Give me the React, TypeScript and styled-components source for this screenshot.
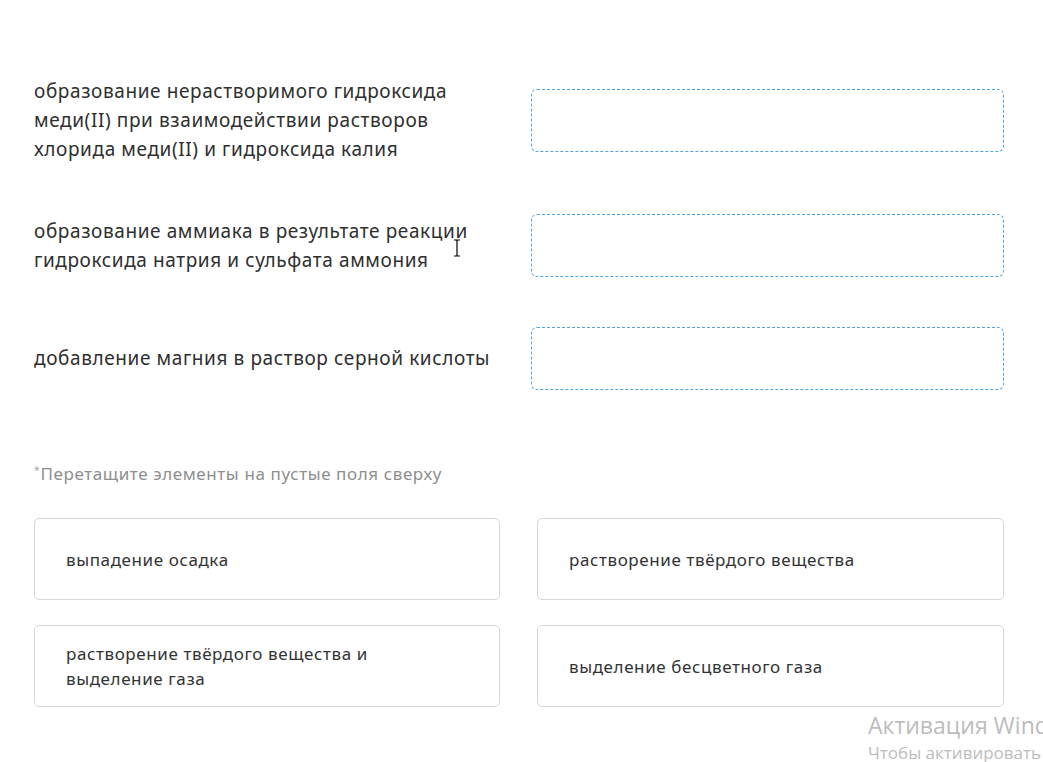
import React from 'react';
import styled, {createGlobalStyle} from 'styled-components';

const GlobalStyle = createGlobalStyle`
  html, body {
    margin: 0;
    padding: 0;
    background: #ffffff;
    overflow: hidden;
  }
  body {
    font-family: 'Noto Sans', 'Open Sans', sans-serif;
    color: #333333;
  }
`;

type Pair = {id: number; text: string};

const PAIRS: Pair[] = [
  {
    id: 1,
    text: 'образование нерастворимого гидроксида меди(II) при взаимодействии растворов хлорида меди(II) и гидроксида калия',
  },
  {
    id: 2,
    text: 'образование аммиака в результате реакции гидроксида натрия и сульфата аммония',
  },
  {id: 3, text: 'добавление магния в раствор серной кислоты'},
];

const OPTIONS = [
  'выпадение осадка',
  'растворение твёрдого вещества',
  'растворение твёрдого вещества и выделение газа',
  'выделение бесцветного газа',
];

const App: React.FC = () => {
  return (
    <>
      <GlobalStyle />
      <Page>
        <PairList>
          {PAIRS.map(p => (
            <PairRow key={p.id}>
              <Question>{p.text}</Question>
              <DropZone />
            </PairRow>
          ))}
        </PairList>

        <Hint>
          <Star>*</Star>Перетащите элементы на пустые поля сверху
        </Hint>

        <OptionGrid>
          {OPTIONS.map(o => (
            <OptionCard key={o}>
              <OptionText>{o}</OptionText>
            </OptionCard>
          ))}
        </OptionGrid>
      </Page>

      {/* text cursor left over the first column */}
      <Cursor width="8" height="18" viewBox="0 0 8 18">
        <path d="M1 1h2.5l0.5 0.6 0.5-0.6H7M4 1.6v14.8M1 17h2.5l0.5-0.6 0.5 0.6H7" stroke="#000" strokeWidth="1.2" fill="none" />
      </Cursor>

      <Watermark>
        <WatermarkTitle>Активация Windows</WatermarkTitle>
        <WatermarkSub>Чтобы активировать Windows, перейдите в раздел «Параметры».</WatermarkSub>
      </Watermark>
    </>
  );
};

const Page = styled.div`
  width: 970px;
  padding: 77px 0 0 34px;
  box-sizing: content-box;
`;

const PairList = styled.div`
  display: flex;
  flex-direction: column;
  gap: 50px;
`;

const PairRow = styled.div`
  display: grid;
  grid-template-columns: 470px 473px;
  column-gap: 27px;
  align-items: center;
`;

const Question = styled.div`
  font-size: 19px;
  line-height: 29px;
  color: #2f2f2f;
  letter-spacing: 0.6px;
`;

const DropZone = styled.div`
  height: 63px;
  box-sizing: border-box;
  border: 1px dashed #4fa3dc;
  border-radius: 6px;
  background: #ffffff;
`;

const Hint = styled.div`
  margin-top: 68px;
  font-size: 17px;
  line-height: 24px;
  letter-spacing: 0.6px;
  color: #8e8e8e;
`;

const Star = styled.span`
  font-size: 10px;
  vertical-align: 6px;
  letter-spacing: 0;
  margin-right: 1px;
  color: #a9a9a9;
`;

const OptionGrid = styled.div`
  display: grid;
  grid-template-columns: 466px 467px;
  column-gap: 37px;
  row-gap: 25px;
  margin-top: 32px;
`;

const OptionCard = styled.div`
  height: 82px;
  box-sizing: border-box;
  border: 1px solid #d6d6d6;
  border-radius: 5px;
  display: flex;
  align-items: center;
  padding: 0 100px 0 31px;
  background: #ffffff;
`;

const OptionText = styled.div`
  font-size: 17px;
  line-height: 25px;
  letter-spacing: 0.6px;
  color: #333333;
`;

const Cursor = styled.svg`
  position: absolute;
  left: 453px;
  top: 239px;
`;

const Watermark = styled.div`
  position: absolute;
  left: 868px;
  top: 710px;
  white-space: nowrap;
  font-family: 'Open Sans', 'Noto Sans', sans-serif;
  color: #bdbdbd;
  pointer-events: none;
`;

const WatermarkTitle = styled.div`
  font-size: 23px;
  line-height: 30px;
`;

const WatermarkSub = styled.div`
  font-size: 17px;
  line-height: 24px;
  margin-top: 1px;
`;

export default App;
